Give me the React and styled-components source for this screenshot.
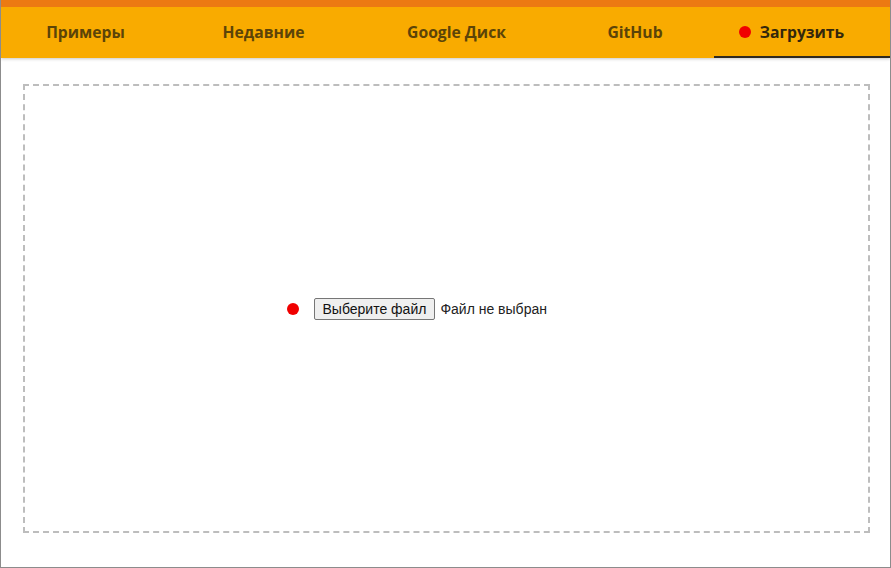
import React from 'react';
import styled, { createGlobalStyle } from 'styled-components';

const GlobalStyle = createGlobalStyle`
  html, body {
    margin: 0;
    padding: 0;
    background: #ffffff;
  }

  * {
    box-sizing: border-box;
  }
`;

const Window = styled.div`
  display: flex;
  flex-direction: column;
  width: 891px;
  height: 568px;
  border: 1px solid #8c8c8c;
  border-top: none;
  background: #ffffff;
  overflow: hidden;
`;

const Header = styled.header`
  border-top: 7px solid #ec7a12;
  background: #f9ab00;
  box-shadow: 0 1px 3px rgba(0, 0, 0, 0.22);
  position: relative;
  z-index: 1;
`;

const Tabs = styled.nav`
  display: grid;
  grid-template-columns: 169px 187px 199px 158px 1fr;
  height: 51px;
`;

const Tab = styled.div`
  display: flex;
  align-items: center;
  justify-content: center;
  padding-top: 1px;
  border-bottom: 2px solid ${(p) => (p.$active ? '#2f2a20' : 'transparent')};
  color: ${(p) => (p.$active ? '#33270c' : '#5c4408')};
  font-family: "Open Sans", "Noto Sans", sans-serif;
  font-size: 15.7px;
  font-weight: 700;
  cursor: pointer;
`;

const TabLabel = styled.span`
  position: relative;
`;

const StatusDot = styled.span`
  position: absolute;
  top: 50%;
  left: ${(p) => p.$offset || -21}px;
  width: ${(p) => p.$size || 11}px;
  height: ${(p) => p.$size || 11}px;
  margin-top: ${(p) => -(p.$size || 11) / 2}px;
  border-radius: 50%;
  background: #f00000;
`;

const Content = styled.main`
  flex: 1;
  display: flex;
  padding: 26px 20px 34px 22px;
`;

const DropZone = styled.div`
  flex: 1;
  display: flex;
  align-items: center;
  justify-content: center;
  border: 2px dashed #bdbdbd;
`;

const FileField = styled.div`
  position: relative;
  display: flex;
  align-items: center;
  gap: 5px;
  width: 266px;
  font-family: "Liberation Sans", Arial, sans-serif;
  font-size: 14px;
  color: #222222;
`;

const PickButton = styled.button`
  height: 22px;
  padding: 1px 8px;
  border: 1px solid #767676;
  border-radius: 2px;
  background: #efefef;
  color: #111111;
  font: inherit;
  cursor: pointer;
`;

const tabs = ['Примеры', 'Недавние', 'Google Диск', 'GitHub', 'Загрузить'];

export default function App() {
  return (
    <>
      <GlobalStyle />
      <Window>
        <Header>
          <Tabs>
            {tabs.map((name, i) => {
              const active = i === tabs.length - 1;
              return (
                <Tab key={name} $active={active}>
                  <TabLabel>
                    {active && <StatusDot $offset={-21} $size={12} />}
                    {name}
                  </TabLabel>
                </Tab>
              );
            })}
          </Tabs>
        </Header>
        <Content>
          <DropZone>
            <FileField>
              <StatusDot $offset={-27} $size={12} />
              <PickButton type="button">Выберите файл</PickButton>
              <span>Файл не выбран</span>
            </FileField>
          </DropZone>
        </Content>
      </Window>
    </>
  );
}
